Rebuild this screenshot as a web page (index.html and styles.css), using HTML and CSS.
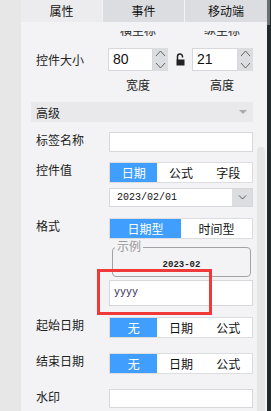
FILE: index.html
```html
<!DOCTYPE html>
<html lang="zh">
<head>
    <meta charset="UTF-8">
    <title>控件属性</title>
    <link rel="stylesheet" href="styles.css">
</head>
<body>
    <div class="app">
        <div class="side"></div>
        <div class="panel">
            <div class="tabs">
                <div class="tab active">属性</div>
                <div class="tab">事件</div>
                <div class="tab">移动端</div>
            </div>
            <div class="body">
                <div class="form">
                    <div class="form-inner">
                        <div class="pair"><span>横坐标</span><span>纵坐标</span></div>

                        <div class="row size">
                            <div class="label">控件大小</div>
                            <div class="size-ctrls">
                                <div class="num">
                                    <div class="num-val">80</div>
                                    <div class="spin">
                                        <svg width="15" height="23" viewBox="0 0 15 23"><polyline points="3,8 7.5,3 12,8" fill="none" stroke="#666" stroke-width="1"/><polyline points="3,15 7.5,20 12,15" fill="none" stroke="#666" stroke-width="1"/></svg>
                                    </div>
                                </div>
                                <div class="lock">
                                    <svg width="9" height="13" viewBox="0 0 9 13"><path d="M1.5 7 V3.5 A2.5 2.5 0 0 1 6.5 3.5 V4.5" fill="none" stroke="#222" stroke-width="1.5"/><rect x="0.5" y="6.5" width="8" height="6" fill="#222"/></svg>
                                </div>
                                <div class="num">
                                    <div class="num-val wide">21</div>
                                    <div class="spin">
                                        <svg width="15" height="23" viewBox="0 0 15 23"><polyline points="3,8 7.5,3 12,8" fill="none" stroke="#666" stroke-width="1"/><polyline points="3,15 7.5,20 12,15" fill="none" stroke="#666" stroke-width="1"/></svg>
                                    </div>
                                </div>
                            </div>
                        </div>

                        <div class="pair under"><span>宽度</span><span>高度</span></div>

                        <div class="section">高级<span class="caret"></span></div>

                        <div class="row">
                            <div class="label">标签名称</div>
                            <div class="ctrl field"></div>
                        </div>

                        <div class="row">
                            <div class="label">控件值</div>
                            <div class="ctrl seg">
                                <div class="on">日期</div>
                                <div>公式</div>
                                <div>字段</div>
                            </div>
                        </div>

                        <div class="row tight">
                            <div class="label"></div>
                            <div class="ctrl select">
                                <div class="select-val">2023/02/01</div>
                                <div class="select-btn">
                                    <svg width="9" height="5" viewBox="0 0 9 5"><polyline points="1,0.5 4.5,4 8,0.5" fill="none" stroke="#555" stroke-width="1"/></svg>
                                </div>
                            </div>
                        </div>

                        <div class="row fmt">
                            <div class="label">格式</div>
                            <div class="ctrl seg two">
                                <div class="on">日期型</div>
                                <div>时间型</div>
                            </div>
                        </div>

                        <div class="row sample-row">
                            <div class="label"></div>
                            <div class="sample">
                                <span class="legend">示例</span>
                                <div class="sample-val">2023-02</div>
                            </div>
                        </div>

                        <div class="row pattern-row">
                            <div class="label"></div>
                            <div class="ctrl pattern">yyyy</div>
                        </div>

                        <div class="row start">
                            <div class="label">起始日期</div>
                            <div class="ctrl seg">
                                <div class="on">无</div>
                                <div>日期</div>
                                <div>公式</div>
                            </div>
                        </div>

                        <div class="row loose">
                            <div class="label">结束日期</div>
                            <div class="ctrl seg">
                                <div class="on">无</div>
                                <div>日期</div>
                                <div>公式</div>
                            </div>
                        </div>

                        <div class="row loose">
                            <div class="label">水印</div>
                            <div class="ctrl field short"></div>
                        </div>
                    </div>
                </div>
                <div class="vbar"></div>
            </div>
        </div>
        <div class="edge"><div class="edge-thumb"></div></div>
        <div class="mark"></div>
    </div>
</body>
</html>
```

FILE: styles.css
```css
* {
    box-sizing: border-box;
}
body {
    margin: 0;
    font-family: "Noto Sans CJK SC", "Noto Sans", sans-serif;
    font-size: 12px;
    color: #222;
}
.app {
    position: relative;
    display: flex;
    width: 271px;
    height: 411px;
    overflow: hidden;
}
.side {
    width: 21px;
    background: #e7e7e7;
}
.panel {
    width: 246px;
    display: flex;
    flex-direction: column;
    background: #f3f3f5;
}
.edge {
    width: 4px;
    background: #1f2b2b;
}
.edge-thumb {
    width: 3px;
    height: 25px;
    background: #6d6f70;
}
.tabs {
    display: grid;
    grid-template-columns: 81px 81px 82px;
    gap: 1px;
    height: 22px;
}
.tab {
    background: #dcdde0;
    text-align: center;
    line-height: 22px;
    color: #111;
}
.tab.active {
    background: #ececee;
}
.body {
    flex: 1;
    display: flex;
    min-height: 0;
    padding-top: 9px;
}
.form {
    flex: 1;
    overflow: hidden;
    padding-left: 15px;
}
.form-inner {
    margin-top: -8px;
}
.vbar {
    width: 8px;
    margin: 116px 2px 0 0;
    background: #e5e5e7;
    border-radius: 4px 4px 0 0;
}

/* rows */
.row {
    display: flex;
    align-items: flex-start;
    margin-top: 10px;
}
.row.tight {
    margin-top: 5px;
}
.row.fmt,
.row.start {
    margin-top: 11px;
}
.row.loose {
    margin-top: 15px;
}
.label {
    width: 73px;
    flex-shrink: 0;
    line-height: 16px;
}
.ctrl {
    width: 144px;
}
.pair {
    display: flex;
    gap: 24px;
    padding-left: 72px;
    line-height: 14px;
}
.pair span {
    width: 60px;
    text-align: center;
}
.pair.under {
    margin-top: 7px;
}

/* size */
.row.size {
    margin-top: 11px;
    align-items: center;
}
.size-ctrls {
    display: flex;
    margin-left: -1px;
}
.num {
    display: flex;
    height: 23px;
}
.num-val {
    width: 45px;
    background: #fff;
    border: 1px solid #d8d8dc;
    padding-left: 4px;
    font-family: "Liberation Sans", Arial, sans-serif;
    font-size: 14px;
    line-height: 21px;
    color: #111;
}
.num-val.wide {
    width: 46px;
}
.spin {
    width: 15px;
    background: #dcdde0;
}
.spin svg {
    display: block;
}
.lock {
    width: 24px;
    display: flex;
    align-items: center;
    justify-content: center;
}

/* section header */
.section {
    display: flex;
    justify-content: space-between;
    align-items: center;
    margin: 10px 0 0 -5px;
    width: 222px;
    height: 20px;
    padding-left: 5px;
    background: #e9e9eb;
}
.caret {
    margin-right: 6px;
    border-left: 4px solid transparent;
    border-right: 4px solid transparent;
    border-top: 4px solid #aaa;
}

/* inputs */
.field {
    height: 20px;
    background: #fff;
    border: 1px solid #d8d8dc;
}
.field.short {
    height: 19px;
}
.seg {
    display: grid;
    grid-template-columns: repeat(3, 1fr);
    height: 21px;
    background: #fff;
    border: 1px solid #dcdde0;
}
.seg.two {
    grid-template-columns: 1fr 1fr;
}
.seg div {
    text-align: center;
    line-height: 19px;
    color: #111;
}
.seg .on {
    background: #409eff;
    color: #fff;
}
.select {
    display: flex;
    height: 19px;
    background: #fff;
    border: 1px solid #d8d8dc;
}
.select-val {
    flex: 1;
    padding-left: 7px;
    font-family: "Liberation Mono", monospace;
    font-size: 10px;
    line-height: 17px;
    color: #111;
}
.select-btn {
    width: 20px;
    display: flex;
    align-items: center;
    justify-content: center;
    background: #dcdde0;
}

/* format sample */
.row.sample-row {
    margin-top: 8px;
}
.sample {
    position: relative;
    width: 139px;
    height: 30px;
    margin-left: 3px;
    border: 1px solid #a3a3a3;
    border-radius: 4px;
}
.legend {
    position: absolute;
    top: -8px;
    left: 2px;
    padding: 0 2px;
    background: #f3f3f5;
    color: #999;
    line-height: 12px;
}
.sample-val {
    padding-top: 11px;
    text-align: center;
    font-family: "Liberation Mono", monospace;
    font-size: 9px;
    font-weight: bold;
    line-height: 12px;
    color: #222;
}
.row.pattern-row {
    margin-top: 3px;
}
.pattern {
    height: 26px;
    padding-left: 4px;
    background: #fff;
    border: 1px solid #d8d8dc;
    font-family: "Liberation Mono", monospace;
    font-size: 10px;
    line-height: 24px;
    color: #2a2350;
}

/* annotation box */
.mark {
    position: absolute;
    left: 97px;
    top: 269px;
    width: 115px;
    height: 46px;
    border: 3px solid #f03a3a;
}
```
